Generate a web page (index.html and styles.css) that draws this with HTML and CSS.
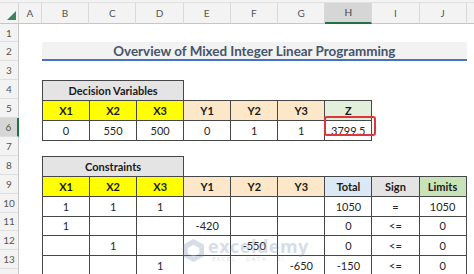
FILE: index.html
```html
<!DOCTYPE html>
<html>
<head>
  <link rel="stylesheet" href="styles.css">
</head>
<body>
  <div class="topbar"></div>
  <div class="sheet">
    <!-- column headers -->
    <div class="corner"><span class="tri"></span></div>
    <div class="colhead">A</div>
    <div class="colhead">B</div>
    <div class="colhead">C</div>
    <div class="colhead">D</div>
    <div class="colhead">E</div>
    <div class="colhead">F</div>
    <div class="colhead">G</div>
    <div class="colhead active-col">H</div>
    <div class="colhead">I</div>
    <div class="colhead">J</div>
    <div class="colhead rest"></div>

    <!-- row headers -->
    <div class="rowhead r1">1</div>
    <div class="rowhead r2">2</div>
    <div class="rowhead r3">3</div>
    <div class="rowhead r4">4</div>
    <div class="rowhead r5">5</div>
    <div class="rowhead r6 active-row">6</div>
    <div class="rowhead r7">7</div>
    <div class="rowhead r8">8</div>
    <div class="rowhead r9">9</div>
    <div class="rowhead r10">10</div>
    <div class="rowhead r11">11</div>
    <div class="rowhead r12">12</div>
    <div class="rowhead r13">13</div>
    <div class="rowhead r14"></div>

    <div class="title">Overview of Mixed Integer Linear Programming</div>

    <div class="block decision">
      <table>
        <tr>
          <th colspan="3" class="gray">Decision Variables</th>
          <td class="blank"></td><td class="blank"></td><td class="blank"></td><td class="blank"></td>
        </tr>
        <tr>
          <th class="yellow">X1</th>
          <th class="yellow">X2</th>
          <th class="yellow">X3</th>
          <th class="peach">Y1</th>
          <th class="peach">Y2</th>
          <th class="peach">Y3</th>
          <th class="green">Z</th>
        </tr>
        <tr>
          <td>0</td><td>550</td><td>500</td><td>0</td><td>1</td><td>1</td><td>3799.5</td>
        </tr>
      </table>
      <div class="highlight"></div>
    </div>

    <div class="block constraints">
      <table>
        <tr>
          <th colspan="3" class="gray">Constraints</th>
          <td class="blank"></td><td class="blank"></td><td class="blank"></td>
          <td class="blank"></td><td class="blank"></td><td class="blank"></td>
        </tr>
        <tr>
          <th class="yellow">X1</th>
          <th class="yellow">X2</th>
          <th class="yellow">X3</th>
          <th class="peach">Y1</th>
          <th class="peach">Y2</th>
          <th class="peach">Y3</th>
          <th class="blue">Total</th>
          <th class="gray">Sign</th>
          <th class="lime">Limits</th>
        </tr>
        <tr>
          <td>1</td><td>1</td><td>1</td><td></td><td></td><td></td><td>1050</td><td>=</td><td>1050</td>
        </tr>
        <tr>
          <td>1</td><td></td><td></td><td>-420</td><td></td><td></td><td>0</td><td>&lt;=</td><td>0</td>
        </tr>
        <tr>
          <td></td><td>1</td><td></td><td></td><td>-550</td><td></td><td>0</td><td>&lt;=</td><td>0</td>
        </tr>
        <tr>
          <td></td><td></td><td>1</td><td></td><td></td><td>-650</td><td>-150</td><td>&lt;=</td><td>0</td>
        </tr>
      </table>
    </div>
  </div>

  <!-- watermark -->
  <div class="watermark">
    <svg width="23" height="25" viewBox="0 0 24 26">
      <polygon points="12,1 23,7 23,19 12,25 1,19 1,7" fill="#6f86b0"/>
      <polygon points="12,7 18,10.5 18,16 12,19.5 6,16 6,10.5" fill="#ffffff"/>
    </svg>
    <div class="wm-text">
      <div class="wm-name">exceldemy</div>
      <div class="wm-sub">EXCEL · DATA · BI</div>
    </div>
  </div>
</body>
</html>
```

FILE: styles.css
```css
body {
  margin: 0;
  background: #ffffff;
  font-family: Lato, "Liberation Sans", sans-serif;
  width: 474px;
  height: 274px;
  overflow: hidden;
  position: relative;
}
.topbar {
  height: 3px;
  background: #f3f3f3;
  border-bottom: 1px solid #e1e1e1;
  box-sizing: border-box;
}
.sheet {
  display: grid;
  grid-template-columns: 19px 23px repeat(9, 47.2px) 1fr;
  grid-template-rows: 20.6px repeat(13, 18.9px) 4.6px;
  overflow: hidden;
}
.corner {
  background: #f3f3f3;
  border-right: 1px solid #d4d4d4;
  border-bottom: 1px solid #c6c6c6;
  position: relative;
}
.tri {
  position: absolute;
  right: 2px;
  bottom: 3px;
  width: 0;
  height: 0;
  border-left: 9px solid transparent;
  border-bottom: 9px solid #1e6e42;
  opacity: 0.85;
}
.colhead {
  background: #f3f3f3;
  border-right: 1px solid #d9d9d9;
  border-bottom: 1px solid #c6c6c6;
  color: #555555;
  font-size: 10px;
  display: flex;
  align-items: center;
  justify-content: center;
}
.colhead.rest {
  border-right: none;
}
.active-col {
  background: #d6d6d6;
  border-bottom: 2px solid #217346;
  color: #444444;
}
.rowhead {
  grid-column: 1;
  background: #f3f3f3;
  border-right: 1px solid #c6c6c6;
  border-bottom: 1px solid #dedede;
  color: #555555;
  font-size: 10px;
  display: flex;
  align-items: center;
  justify-content: center;
}
.active-row {
  background: #d6d6d6;
  border-right: 2px solid #217346;
}
.r1 { grid-row: 2; }
.r2 { grid-row: 3; }
.r3 { grid-row: 4; }
.r4 { grid-row: 5; }
.r5 { grid-row: 6; }
.r6 { grid-row: 7; }
.r7 { grid-row: 8; }
.r8 { grid-row: 9; }
.r9 { grid-row: 10; }
.r10 { grid-row: 11; }
.r11 { grid-row: 12; }
.r12 { grid-row: 13; }
.r13 { grid-row: 14; }
.r14 { grid-row: 15; border-bottom: none; }

.title {
  grid-column: 3 / 12;
  grid-row: 3;
  background: #f2f2f2;
  border-bottom: 2px solid #4472c4;
  color: #44546a;
  font-weight: bold;
  font-size: 13.4px;
  display: flex;
  align-items: center;
  justify-content: center;
}

.block {
  position: relative;
}
.decision {
  grid-column: 3 / 10;
  grid-row: 5 / 8;
}
.constraints {
  grid-column: 3 / 12;
  grid-row: 9 / 15;
}
table {
  border-collapse: collapse;
  table-layout: fixed;
  width: 100%;
  height: 100%;
}
th, td {
  border: 1px solid #474747;
  padding: 0;
  height: 18.9px;
  text-align: center;
  font-size: 11px;
  color: #262626;
}
th {
  font-weight: bold;
  color: #1a1a1a;
}
td.blank {
  border: none;
}
.gray { background: #e4e4e4; }
.yellow { background: #ffff00; }
.peach { background: #fce8c8; }
.green { background: #e2efda; }
.blue { background: #dbe8f6; }
.lime { background: #c9e3b8; }

.highlight {
  position: absolute;
  left: 282px;
  top: 36px;
  width: 48px;
  height: 16px;
  border: 2px solid #e0353b;
  border-radius: 3px;
}

.watermark {
  position: absolute;
  left: 182px;
  top: 237px;
  display: flex;
  align-items: center;
  gap: 3px;
  opacity: 0.28;
}
.wm-name {
  font-family: "Open Sans", sans-serif;
  font-weight: bold;
  font-size: 18px;
  line-height: 18px;
  color: #6f86b0;
  letter-spacing: 0.5px;
}
.wm-sub {
  font-family: "Open Sans", sans-serif;
  font-size: 6px;
  line-height: 8px;
  letter-spacing: 1.5px;
  color: #6f86b0;
  padding-left: 4px;
}
```
